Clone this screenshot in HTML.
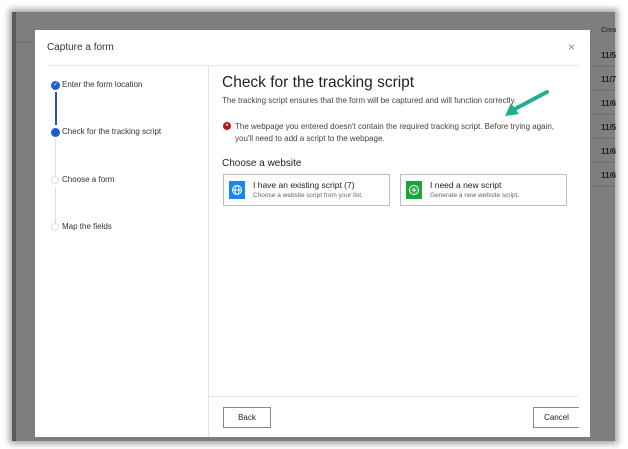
<!DOCTYPE html>
<html><head><style>
*{margin:0;padding:0;box-sizing:border-box}
body{width:628px;height:449px;background:#fff;font-family:"Liberation Sans",sans-serif;position:relative;overflow:hidden}
.abs{position:absolute}
.bg{left:12px;top:12px;width:603px;height:429px;background:#7e7e7e;box-shadow:0 0 6px 3px rgba(0,0,0,.35)}
.row{position:absolute;left:592px;width:23px;height:1px;background:#6e6e6e}
.rt{position:absolute;left:601px;font-size:8px;font-weight:bold;color:#222}
.modal{left:35px;top:30px;width:555px;height:407px;background:#fff}
.t{position:absolute;white-space:nowrap;color:#333}
.card{position:absolute;top:174px;width:167px;height:32px;border:1px solid #bdbdbd;background:#fff}
.btn{position:absolute;top:407px;height:21px;border:1px solid #8a8a8a;font-size:8px;color:#222;text-align:center;line-height:19px;background:#fff}
</style></head><body>
<div class="abs bg"></div>
<div class="abs" style="left:12px;top:12px;width:4px;height:429px;background:#5a5a5a"></div>
<div class="abs" style="left:16px;top:42px;width:576px;height:1px;background:#6e6e6e"></div>
<div class="row" style="top:66px"></div><div class="row" style="top:90px"></div><div class="row" style="top:114px"></div><div class="row" style="top:138px"></div><div class="row" style="top:162px"></div><div class="row" style="top:186px"></div>
<div class="rt" style="top:27px;font-weight:normal;font-size:7px">Crea</div>
<div class="rt" style="top:51px">11/5</div><div class="rt" style="top:75px">11/7</div><div class="rt" style="top:99px">11/6</div><div class="rt" style="top:123px">11/5</div><div class="rt" style="top:147px">11/6</div><div class="rt" style="top:171px">11/6</div>
<div class="abs modal"></div>
<div class="t" style="left:47px;top:42px;font-size:10px">Capture a form</div>
<div class="t" style="left:568px;top:40px;font-size:12px;color:#888">×</div>
<div class="abs" style="left:47px;top:65px;width:531px;height:1px;background:#e3e3e3"></div>
<div class="abs" style="left:208px;top:66px;width:1px;height:371px;background:#e3e3e3"></div>
<div class="abs" style="left:208px;top:396px;width:370px;height:1px;background:#e3e3e3"></div>
<!-- steps -->
<div class="abs" style="left:55px;top:92px;width:1.5px;height:33px;background:#1e50c8"></div>
<div class="abs" style="left:55px;top:139px;width:1px;height:37px;background:#ddd"></div>
<div class="abs" style="left:55px;top:187px;width:1px;height:36px;background:#ddd"></div>
<div class="abs" style="left:51px;top:81px;width:9px;height:9px;border-radius:50%;background:#1e5ad0;color:#fff;font-size:6px;line-height:9px;text-align:center">✓</div>
<div class="abs" style="left:51px;top:128px;width:9px;height:9px;border-radius:50%;background:#1e5ad0"></div>
<div class="abs" style="left:51px;top:176px;width:8px;height:8px;border-radius:50%;border:1px solid #ddd"></div>
<div class="abs" style="left:51px;top:223px;width:8px;height:8px;border-radius:50%;border:1px solid #ddd"></div>
<div class="t" style="left:62px;top:80px;font-size:8px">Enter the form location</div>
<div class="t" style="left:62px;top:127px;font-size:8px">Check for the tracking script</div>
<div class="t" style="left:62px;top:175px;font-size:8px">Choose a form</div>
<div class="t" style="left:62px;top:222px;font-size:8px">Map the fields</div>
<!-- main -->
<div class="t" style="left:222px;top:74px;font-size:15.5px;color:#222">Check for the tracking script</div>
<div class="t" style="left:222px;top:96px;font-size:8px;color:#444">The tracking script ensures that the form will be captured and will function correctly.</div>
<div class="abs" style="left:223px;top:122px;width:8px;height:8px;border-radius:50%;background:#b01c1c;color:#fff;font-size:6px;line-height:8px;text-align:center">×</div>
<div class="t" style="left:235px;top:121px;font-size:8px;line-height:11.5px;color:#444">The webpage you entered doesn't contain the required tracking script. Before trying again,<br>you'll need to add a script to the webpage.</div>
<div class="t" style="left:222px;top:158px;font-size:10px;color:#222">Choose a website</div>
<div class="card" style="left:223px"></div>
<div class="card" style="left:400px"></div>
<div class="abs" style="left:229px;top:181px;width:16px;height:18px;background:#1a86f0"></div>
<svg class="abs" style="left:231px;top:184px" width="12" height="12" viewBox="0 0 12 12" fill="none" stroke="#fff" stroke-width="1"><circle cx="6" cy="6" r="4.5"/><ellipse cx="6" cy="6" rx="2" ry="4.5"/><path d="M1.5 6h9"/></svg>
<div class="abs" style="left:406px;top:181px;width:16px;height:18px;background:#1ea43c"></div>
<svg class="abs" style="left:408px;top:184px" width="12" height="12" viewBox="0 0 12 12" fill="none" stroke="#fff" stroke-width="1"><circle cx="6" cy="6" r="4.5"/><path d="M6 3.5v5M3.5 6h5"/></svg>
<div class="t" style="left:253px;top:180px;font-size:8.5px;color:#222">I have an existing script (7)</div>
<div class="t" style="left:253px;top:192px;font-size:6.5px;color:#666">Choose a website script from your list.</div>
<div class="t" style="left:430px;top:180px;font-size:8.5px;color:#222">I need a new script</div>
<div class="t" style="left:430px;top:192px;font-size:6.5px;color:#666">Generate a new website script.</div>
<svg class="abs" style="left:495px;top:86px" width="60" height="36" viewBox="0 0 60 36"><path d="M52 6 L18 24" stroke="#1fae93" stroke-width="4" stroke-linecap="round"/><path d="M10 30 L16 17 L24 28 Z" fill="#1fae93"/></svg>
<div class="btn" style="left:223px;width:48px">Back</div>
<div class="btn" style="left:533px;width:46px;border-right:none">Cancel</div>
</body></html>
